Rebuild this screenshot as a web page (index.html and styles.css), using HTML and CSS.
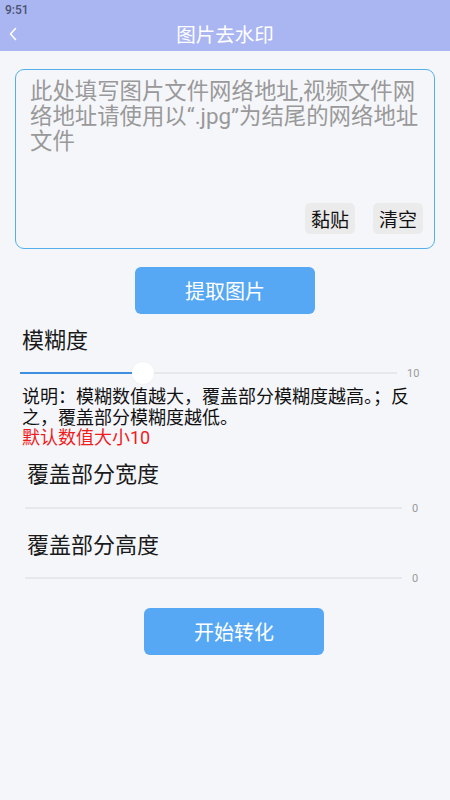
FILE: index.html
```html
<!DOCTYPE html>
<html lang="zh-CN">
<head>
<meta charset="utf-8">
<title>图片去水印</title>
<link rel="stylesheet" href="styles.css">
</head>
<body>
<div class="app">
  <header class="header">
    <div class="status">9:51</div>
    <div class="titlebar">
      <svg class="back" width="12" height="16" viewBox="0 0 12 16"><path d="M8.5 2.5 L3.5 8 L8.5 13.5" fill="none" stroke="#ffffff" stroke-width="1.6" stroke-linecap="round" stroke-linejoin="round"/></svg>
      <div class="title">图片去水印</div>
    </div>
  </header>
  <main class="content">
    <div class="inputbox">
      <div class="placeholder">此处填写图片文件网络地址,视频文件网络地址请使用以“.jpg”为结尾的网络地址文件</div>
      <div class="tools">
        <span class="tool">黏贴</span>
        <span class="tool">清空</span>
      </div>
    </div>
    <div class="btnrow"><button class="primary">提取图片</button></div>
    <div class="label blur-label">模糊度</div>
    <div class="slider first">
      <div class="track"><div class="fill" style="width:113px"></div><div class="thumb" style="left:112px"></div></div>
      <span class="val">10</span>
    </div>
    <div class="note">说明：模糊数值越大，覆盖部分模糊度越高。；反之，覆盖部分模糊度越低。</div>
    <div class="note red">默认数值大小10</div>
    <div class="label sub width-label">覆盖部分宽度</div>
    <div class="slider second">
      <div class="track"></div>
      <span class="val">0</span>
    </div>
    <div class="label sub height-label">覆盖部分高度</div>
    <div class="slider second">
      <div class="track"></div>
      <span class="val">0</span>
    </div>
    <div class="btnrow convert"><button class="primary">开始转化</button></div>
  </main>
</div>
</body>
</html>
```
FILE: styles.css
```css
* { box-sizing: border-box; }
html, body { margin: 0; padding: 0; }
body {
  width: 450px;
  height: 800px;
  background: #f5f6fa;
  font-family: Roboto, "Noto Sans CJK SC", sans-serif;
  overflow: hidden;
}
.header {
  background: #aab6f2;
  height: 51px;
}
.status {
  height: 20px;
  padding-left: 5px;
  font-family: Roboto, "Noto Sans", sans-serif;
  font-size: 12px;
  font-weight: 500;
  line-height: 21px;
  color: #4b5170;
}
.titlebar {
  position: relative;
  height: 31px;
  padding-bottom: 4px;
  display: flex;
  align-items: center;
  justify-content: center;
}
.back {
  position: absolute;
  left: 7px;
  top: 6px;
}
.title {
  color: #ffffff;
  font-family: "Noto Sans CJK SC", sans-serif;
  font-size: 19.5px;
  line-height: 28px;
}
.content {
  padding: 18px 15px 0 15px;
}
.inputbox {
  height: 180px;
  border: 1.5px solid #55b0ea;
  border-radius: 9px;
  padding: 9px 14px 14px 14px;
  display: flex;
  flex-direction: column;
  justify-content: space-between;
}
.placeholder {
  color: #999999;
  font-size: 22.4px;
  line-height: 25px;
}
.tools {
  display: flex;
  justify-content: flex-end;
  gap: 18px;
  margin-right: -3px;
}
.tool {
  background: #ebebeb;
  border-radius: 5px;
  width: 50px;
  height: 31px;
  font-family: "Noto Sans CJK SC", sans-serif;
  font-size: 19px;
  line-height: 31px;
  text-align: center;
  color: #111111;
}
.btnrow {
  display: flex;
  padding-top: 18px;
  padding-left: 120px;
}
.btnrow.convert {
  padding-left: 129px;
  padding-top: 20px;
}
.primary {
  width: 180px;
  height: 47px;
  border: none;
  border-radius: 6px;
  background: #56a7f4;
  color: #ffffff;
  font-family: "Noto Sans CJK SC", sans-serif;
  font-size: 20px;
  padding: 0;
}
.label {
  color: #1a1a1a;
  font-family: "Noto Sans CJK SC", sans-serif;
  font-size: 22px;
  line-height: 30px;
}
.blur-label {
  margin-top: 9px;
  padding-left: 7px;
}
.slider {
  display: flex;
  align-items: center;
  height: 20px;
}
.slider.first {
  margin-top: 10px;
  padding-left: 5px;
}
.slider.second {
  padding-left: 10px;
  margin-top: 10px;
}
.width-label + .slider.second { margin-top: 11px; }
.track {
  position: relative;
  height: 2px;
  width: 377px;
  background: #e7e8ec;
}
.fill {
  position: absolute;
  left: 0;
  top: 0;
  height: 2px;
  background: #3f8fe0;
}
.thumb {
  position: absolute;
  top: -10px;
  width: 22px;
  height: 22px;
  border-radius: 50%;
  background: #ffffff;
  box-shadow: 0 0 2px rgba(0,0,0,0.05);
}
.val {
  font-family: Roboto, sans-serif;
  font-size: 11px;
  color: #9a9a9a;
  margin-left: 10px;
}
.note {
  color: #111111;
  font-family: "Noto Sans CJK SC", sans-serif;
  font-size: 18px;
  line-height: 21px;
  padding-left: 7px;
  padding-right: 12px;
}
.slider.first + .note { margin-top: 2px; }
.note.red {
  font-family: Roboto, "Noto Sans CJK SC", sans-serif;
  color: #f01c1c;
  line-height: 19px;
  margin-top: 1px;
}
.label.sub {
  padding-left: 12px;
}
.width-label { margin-top: 10px; }
.height-label { margin-top: 10px; }
```
